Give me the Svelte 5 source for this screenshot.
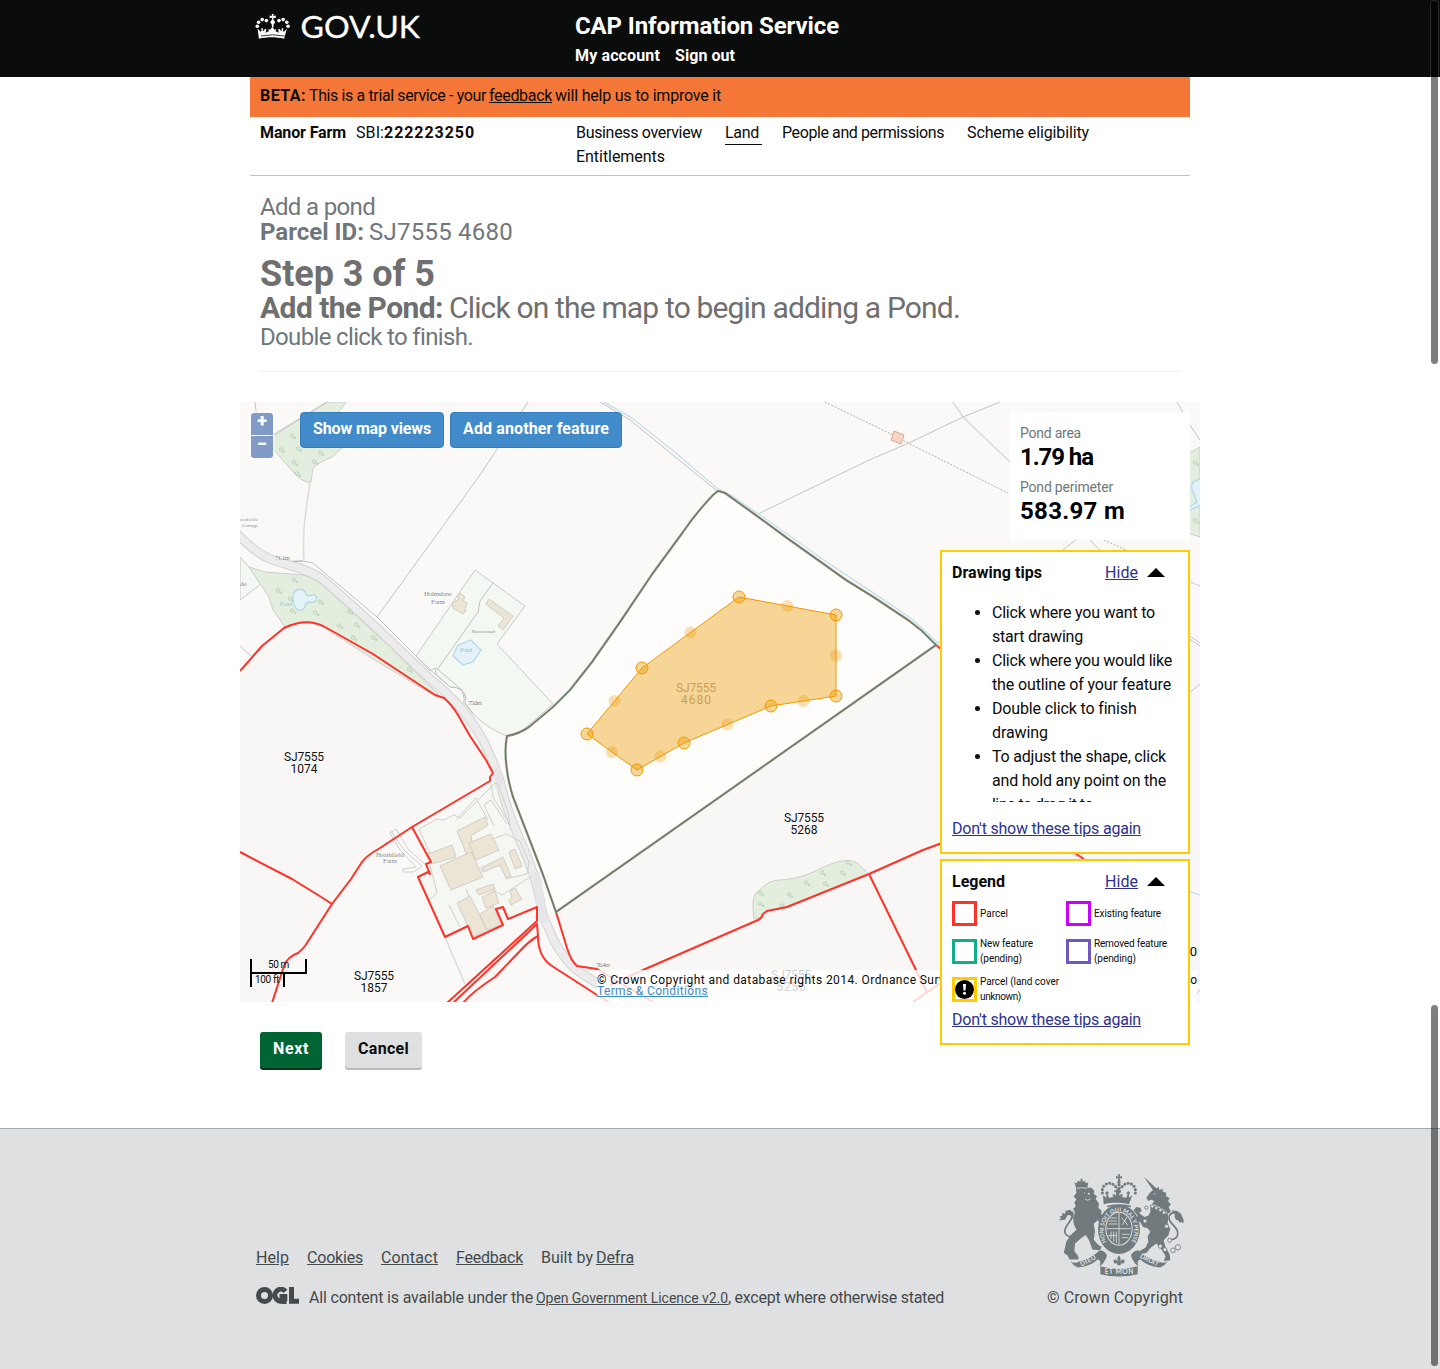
<script>
  // Spreads a run of text to a set measure by adjusting its letter-spacing.
  function fit(node, width) {
    const natural = node.getBoundingClientRect().width;
    node.style.letterSpacing = `${(width - natural) / node.textContent.length}px`;
  }

  const tips = [
    [['Click where you want to', 163], ['start drawing', 91]],
    [['Click where you would like', 180], ['the outline of your feature', 179]],
    [['Double click to finish', 144], ['drawing', 56]],
    [['To adjust the shape, click', 174], ['and hold any point on the', 174], ['line to drag it to', 101]]
  ];

  const legend = [
    { kind: 'parcel', lines: [['Parcel', 28]] },
    { kind: 'existing', lines: [['Existing feature', 67]] },
    { kind: 'added', lines: [['New feature', 53], ['(pending)', 42]] },
    { kind: 'removed', lines: [['Removed feature', 73], ['(pending)', 42]] },
    { kind: 'unknown', lines: [['Parcel (land cover', 79], ['unknown)', 41]] }
  ];

  const links = [['Help', 33], ['Cookies', 56], ['Contact', 57], ['Feedback', 67]];

  const pond = [[739, 597], [836, 615], [836, 696], [771, 706], [684, 743], [637, 770], [587, 734], [642, 668]];
  const mids = pond.map((p, i) => {
    const q = pond[(i + 1) % pond.length];
    return [(p[0] + q[0]) / 2, (p[1] + q[1]) / 2];
  });
  const pondPoints = pond.map((p) => p.join()).join(' ');

  const trees = [
    [293, 436], [282, 450], [299, 449], [321, 453], [295, 463], [315, 462], [298, 474],
    [295, 580], [279, 591], [291, 599], [321, 602], [293, 611], [316, 613], [340, 626], [357, 625], [354, 638], [374, 638], [410, 670],
    [761, 893], [761, 904], [790, 895], [807, 883], [823, 873], [826, 884], [843, 873], [783, 906], [849, 863],
    [1196, 463], [1196, 521], [350, 612]
  ];

  const parcels = [
    ['SJ7555', '1074', 304, 761], ['SJ7555', '5268', 804, 822], ['SJ7555', '1857', 374, 980]
  ];

  const parcelPath =
    'M718,491L725,493L757,516L787,538L825,565L846,580L875,598L908,620L922,631L936,645L556,912L542,872L527,833L513,797Q508,780 507,770Q504,750 507,736Q519,734 529,727L553,707L570,690L592,662L620,622L653,573L683,532Q695,514 713,495Z';
  const road =
    'M236,533Q256,553 268,558C286,566 305,567 322,579Q350,603 380,631L430,679Q465,706 485,744Q497,770 500,782Q506,808 520,840Q535,873 540,900Q541,914 549,929Q557,951 574,968Q596,985 640,1004';

  const crownBeads = [[2.3, 26.2], [3.6, 22.2], [7.2, 19.6], [11.4, 20.6], [24, 20.6], [28.2, 19.6], [31.8, 22.2], [33.1, 26.2]];
  const crestBeads = [[190, 98], [190, 88], [194, 78], [202, 71], [212, 69], [222, 72], [230, 79], [249, 79], [257, 72], [267, 69], [277, 71], [285, 78], [289, 88], [289, 98]];
</script>

{#snippet crown()}
  <g>
    {#each crownBeads as [x, y]}
      <circle cx={x} cy={y} r="1.8" />
    {/each}
    <path d="M16.700 14h2l-.4 2.100 2.500-.5v2.600l-2.500-.5.3 2.500a2 2 0 0 1 .1 3.800l-.3 3.400h-1.400l-.3-3.400a2 2 0 0 1 .1-3.800l.3-2.500-2.500.5v-2.600l2.500.5z" />
    <path d="M2.600 28.600l2.900 3.200 1-.9-.3-2.700h1.600l.1 3.200 2.400-2.700 1.100.8-.8 3.200 3.300-1.500-.6-2.300 1.900.9 1.500-2.300 1 0 .1 0 1.500 2.300 1.900-.9-.6 2.300 3.300 1.500-.8-3.200 1.100-.8 2.400 2.700.1-3.200h1.600l-.3 2.700 1 .9 2.900-3.200-2.800 10.100c-8-2-17.200-2-25.200 0z" />
  </g>
{/snippet}

<header class="masthead">
  <div class="wrap masthead-row">
    <div class="brand">
      <svg class="brand-mark" viewBox="0 0 200 48" role="img" aria-label="GOV.UK">
        {@render crown()}
        <path class="cut" d="M6 36Q17.700 33.600 29.400 36" />
        <text x="45.500" y="37.800" textLength="119.500" lengthAdjust="spacingAndGlyphs">GOV.UK</text>
      </svg>
    </div>
    <div class="service">
      <div class="service-name"><span use:fit={264}>CAP Information Service</span></div>
      <nav class="account"><a use:fit={85}>My account</a><a use:fit={60}>Sign out</a></nav>
    </div>
  </div>
</header>

<main class="wrap">
  <div class="beta">
    <b use:fit={46}>BETA:</b><span use:fit={177}>This is a trial service - your</span><span class="u" use:fit={63}>feedback</span><span use:fit={166}>will help us to improve it</span>
  </div>

  <div class="business">
    <div class="business-id">
      <b use:fit={86}>Manor Farm</b>
      <span class="sbi"><span use:fit={28}>SBI:</span><b use:fit={91}>222223250</b></span>
    </div>
    <nav class="tabs">
      <a use:fit={126}>Business overview</a>
      <a class="current"><span use:fit={34}>Land</span></a>
      <a use:fit={162}>People and permissions</a>
      <a use:fit={122}>Scheme eligibility</a>
      <a use:fit={89}>Entitlements</a>
    </nav>
  </div>

  <section class="intro">
    <p class="lead"><span use:fit={115}>Add a pond</span></p>
    <p class="lead"><b use:fit={104}>Parcel ID:</b><span use:fit={144}>SJ7555 4680</span></p>
    <h1><span use:fit={175}>Step 3 of 5</span></h1>
    <h2><b use:fit={183}>Add the Pond:</b><span use:fit={511}>Click on the map to begin adding a Pond.</span></h2>
    <p class="lead"><span use:fit={212}>Double click to finish.</span></p>
  </section>

  <section class="map">
    <svg class="canvas" viewBox="240 402 960 600" aria-label="Map">
      <rect class="ground" x="240" y="402" width="960" height="600" />
      <g class="fields">
        <path d="M240,671L262,646L284,627L307,622L373,658L435,695L455,712L493,772L490,781L412,827L363,860L332,904L272,1002H240Z" />
        <path d="M936,645L556,912L575,964L597,969L653,1002H1200V645Z" />
      </g>

      <g class="pale">
        <path d="M240,557L249,567L261,584L240,600Z" />
        <path d="M475,570L525,606L497,644L553,704L523,730Q515,736 507,736Q490,730 474,715L463,702L466,698Q464,687 450,687L435,674L416,656Z" />
        <path class="bare" d="M412,827L453,818L490,783L505,790L524,845L529,870L536,910L503,925L445,937L418,877L431,862Z" />
      </g>
      <g class="wood">
        <path d="M327,402H346L338,413L342,448L332,457Q319,462 313,468L311,482Q303,483 295,474L267,442L275,435Z" />
        <path d="M249,567L265,572L303,575Q313,577 320,583L350,610L390,647L438,694L433,695L373,659L323,627Q305,618 285,627L273,610L269,597Z" />
        <path d="M754,919Q750,893 760,890Q768,880 780,880Q795,880 813,872Q846,855 857,863L869,874L787,907L766,911L760,918Z" />
        <path d="M1188,454L1200,447V537L1188,533Z" />
      </g>

      <g class="line">
        <path d="M255,402L260,447" />
        <path d="M327,402L266,439L261,447L267,444" />
        <path class="soft" d="M310,482L307,503Q302,533 304,560" />
        <path class="dark" d="M240,533Q258,556 271,561Q290,562 303,561" />
        <path d="M303,561L313,563L377,617L416,656L430,671L435,668L436,674L450,687Q464,686 466,700" />
        <path d="M528,402L480,475L377,617" />
        <path d="M240,646L251,656" />
        <path d="M493,583L480,601L478,612L437,670" />
        <path class="soft" d="M445,937L465,984" />
        <path d="M600,402L630,420L673,455L717,491" />
        <path d="M758,514L867,461L909,443L963,417L1000,402" />
        <path class="soft" d="M953,402L963,417L1010,462" />
        <path class="dots" d="M825,402L893,435L908,443L1008,493" />
        <path class="dots" d="M1104,540L1128,551" />
        <path d="M1063,550L1078,538M1090,540L1100,550" />
        <path d="M1177,402L1190,425L1200,440" />
        <path class="dots" d="M1188,581L1200,586" />
        <path d="M1188,635L1200,643M1188,638L1200,646M1188,694L1200,684" />
        <path d="M1188,1003L1200,990" />
        <path d="M436,668L462,690Q464,700 466,704L474,715" />
      </g>
      <path class="road-edge" d={road} />
      <path class="road" d={road} />
      <path class="road-shade" d="M497,768L499,788M536,872L540,900L543,922" />

      <g class="tracks">
        <path d="M391,831L404,850L422,866L414,872L403,872L403,869L416,867L400,850L390,833L396,829L408,849L426,865" />
        <path d="M419,829L437,819L443,820L454,815L460,818L495,783L498,784L508,812L510,825L493,797L491,784M419,829L430,853M456,820L476,798L488,820M484,805L494,826M484,805L491,800L507,824M490,840L506,834L520,841L529,862L527,874L505,879M430,865L437,893L429,900M449,905L460,927M466,889L475,910M487,886L502,895L532,876" />
      </g>

      <g class="tan">
        <path d="M457,831L485,817L488,825L471,836L474,853L468,858Z" />
        <path d="M469,843L491,834L499,850L476,860Z" />
        <path d="M428,854L452,845L456,857L432,864Z" />
        <path d="M440,866L471,852L483,877L451,890Z" />
        <path d="M481,868L503,857L511,876L506,878L500,865L483,872Z" />
        <path d="M509,852L515,849L522,866L515,869Z" />
        <path d="M457,903L470,896L487,930L473,937Z" />
        <path d="M480,914L493,906L501,925L487,930Z" />
        <path d="M476,890L493,884L495,889L479,895Z" />
        <path d="M482,897L495,891L499,903L486,908Z" />
        <path d="M509,900L512,897L510,891L515,888L518,893L522,899L511,905Z" />
        <path d="M452,603L456,601L459,599L457,596L460,593L465,597L463,601L467,603L465,609L466,611L463,614L453,608Z" />
        <path d="M489,599L513,616L503,630L498,626L504,618L486,604Z" />
      </g>
      <path class="pink" d="M894,431L904,435L901,444L891,440Z" />

      <g class="water">
        <path d="M293,596C294,588 303,588 305,592C307,599 310,594 315,595C319,599 314,604 309,602C304,602 307,608 302,610C295,612 292,602 293,596Z" />
        <path d="M471,640L481,650L473,662L463,665L453,656L458,645Z" />
        <path d="M1201,479Q1190,481 1192,489L1197,502L1188,508L1188,511L1201,505Z" />
      </g>
      <g class="stream">
        <path d="M604,402L632,418L676,453L718,489L729,494L760,515L790,536L828,563L878,596L912,619L938,643L942,641" />
        <path d="M1068,852L1084,860M1188,891L1200,895" />
      </g>

      <g class="trees">
        {#each trees as [x, y]}
          <circle cx={x - 1} cy={y - 0.5} r="1.7" />
          <circle cx={x + 2} cy={y + 1.8} r="0.9" />
        {/each}
      </g>

      <g class="names">
        <text x="240" y="521" textLength="18">oodside</text>
        <text x="242" y="527" textLength="16">Cottage</text>
        <text class="n7" x="275" y="560" textLength="15">71.1m</text>
        <text class="n7" x="240" y="586">de</text>
        <text class="n7" x="424" y="596" textLength="28">Holmshaw</text>
        <text class="n7" x="431" y="604" textLength="14">Farm</text>
        <text x="472" y="633" textLength="23">Ravenwood</text>
        <text class="n7" x="468" y="705" textLength="14">75.0m</text>
        <text class="n7" x="376" y="857" textLength="28">Heathfield</text>
        <text class="n7" x="383" y="863" textLength="14">Farm</text>
        <text class="n7 faint" x="546" y="871" textLength="15">75.3m</text>
        <text class="n7" x="596" y="967" textLength="14">76.4m</text>
        <text class="blue" x="280" y="606" textLength="12">Pond</text>
        <text class="blue" x="460" y="652" textLength="12">Pond</text>
      </g>

      <g class="red">
        <path d="M240,671L262,646L284,628Q307,617 325,627L373,654L435,695L444,698Q452,705 458,715L470,736L486,760L493,773L490,777L490,781L412,827L380,848Q366,856 362,862L351,879L332,904L305,946Q302,950 298,953Q287,957 284,966L272,1003" />
        <path d="M240,852L292,879L318,895L332,904" />
        <path d="M412,827L431,862L426,864L430,874L428,872L418,877L445,937L468,926L473,939L503,925L496,909L503,907L508,919L537,907V921L447,1003" />
        <path d="M453,1003L537,924L538,936Q538,957 552,966L597,995L610,1003" />
        <path d="M463,1003Q472,992 495,977L519,952Q530,940 538,936" />
        <path d="M556,912L567,948Q571,961 577,966L597,969L653,1002" />
        <path d="M610,985L643,970L758,920Q762,918 763,914L767,911L787,907L869,874L923,850L942,843" />
        <path d="M869,874L916,970L927,993M913,1002L942,982" />
        <path d="M934,643L944,652M1070,850L1084,859" />
      </g>

      <path class="chosen" d={parcelPath} />
      <path class="chosen-rim" d={parcelPath} />

      <g class="labels">
        {#each parcels as [a, b, x, y]}
          <text {x} {y} textLength="40">{a}</text>
          <text {x} y={y + 12} textLength="27">{b}</text>
        {/each}
        <text class="dim" x="696" y="692" textLength="40">SJ7555</text>
        <text class="dim" x="696" y="704" textLength="30">4680</text>
        <text x="791" y="979" textLength="40">SJ7555</text>
        <text x="791" y="991" textLength="29">5256</text>
      </g>

      <polygon class="pond" points={pondPoints} />
      {#each pond as [x, y]}
        <circle class="vertex" cx={x} cy={y} r="6" />
      {/each}
      {#each mids as [x, y]}
        <circle class="mid" cx={x} cy={y} r="6" />
      {/each}
    </svg>

    <div class="zoom"><button aria-label="Zoom in">+</button><button aria-label="Zoom out">−</button></div>

    <div class="tools">
      <button class="blue-btn"><span use:fit={118}>Show map views</span></button>
      <button class="blue-btn"><span use:fit={146}>Add another feature</span></button>
    </div>

    <div class="scale">
      <div class="metric"><span use:fit={21}>50 m</span></div>
      <div class="imperial"><span use:fit={24}>100 ft</span></div>
    </div>

    <span class="grid-ref">0</span>
    <div class="credit">
      <div class="credit-row"><span use:fit={361}>© Crown Copyright and database rights 2014. Ordnance Survey</span><span>o</span></div>
      <a use:fit={111}>Terms &amp; Conditions</a>
    </div>

    <div class="measure">
      <div class="m-label"><span use:fit={61}>Pond area</span></div>
      <div class="m-value"><span use:fit={73}>1.79 ha</span></div>
      <div class="m-label"><span use:fit={93}>Pond perimeter</span></div>
      <div class="m-value"><span use:fit={105}>583.97 m</span></div>
    </div>

    <div class="panels">
      <section class="panel tips">
        <div class="panel-head"><b use:fit={90}>Drawing tips</b><span class="hide"><a use:fit={33}>Hide</a><i class="tri"></i></span></div>
        <ul>
          {#each tips as lines}
            <li>{#each lines as [text, w]}<div><span use:fit={w}>{text}</span></div>{/each}</li>
          {/each}
        </ul>
        <a class="dismiss"><span use:fit={189}>Don't show these tips again</span></a>
      </section>

      <section class="panel key">
        <div class="panel-head"><b use:fit={53}>Legend</b><span class="hide"><a use:fit={33}>Hide</a><i class="tri"></i></span></div>
        <div class="key-grid">
          {#each legend as item}
            <div class="key-item">
              <span class="swatch {item.kind}">
                {#if item.kind === 'unknown'}
                  <svg viewBox="0 0 19 19"><circle cx="9.500" cy="9.500" r="9.500" /><path d="M8 4h3l-.5 6.500h-2z" /><circle class="dot" cx="9.500" cy="13.300" r="1.500" /></svg>
                {/if}
              </span>
              <div class="key-text">{#each item.lines as [text, w]}<div><span use:fit={w}>{text}</span></div>{/each}</div>
            </div>
          {/each}
        </div>
        <a class="dismiss"><span use:fit={189}>Don't show these tips again</span></a>
      </section>
    </div>
  </section>

  <div class="actions">
    <button class="next"><span use:fit={36}>Next</span></button>
    <button class="cancel"><span use:fit={51}>Cancel</span></button>
  </div>
</main>

<footer class="footer">
  <div class="footer-row">
    <div class="footer-main">
      <nav class="footer-links">
        {#each links as [text, w]}<a use:fit={w}>{text}</a>{/each}
        <span class="built"><span use:fit={52}>Built by</span><a use:fit={38}>Defra</a></span>
      </nav>
      <div class="licence">
        <svg class="ogl" viewBox="0 0 43 17" aria-label="OGL">
          <circle cx="8.500" cy="8.500" r="6" />
          <path d="M29.500 4.300A6 6 0 1 0 28.800 12.800V9.600H23.500M28 8v9" />
          <path d="M35.500 0V14.300H43" />
        </svg>
        <span use:fit={224}>All content is available under the</span><a class="small" use:fit={192}>Open Government Licence v2.0</a><span class="tail" use:fit={216}>, except where otherwise stated</span>
      </div>
    </div>
    <div class="copyright">
      <svg class="crest" viewBox="54 38 381 314" aria-label="Royal coat of arms">
        <g class="ink">
          <path d="M236 42h8l-2 7 7-2v8l-7-2 2 9h-8l2-9-7 2v-8l7 2z" />
          {#each crestBeads as [x, y]}<circle cx={x} cy={y} r="4.600" />{/each}
          <circle cx="240" cy="84" r="5" /><circle cx="240" cy="73" r="4.500" /><circle cx="240" cy="66" r="5" /><circle cx="240" cy="94" r="5" />
          <path d="M192 104l10 8 0-10-4-4 6-6 6 6-4 4 4 10 14-2-4-6 5-4 5 6 2-10h-6v-6h6v-5h8v5h6v6h-6l2 10 5-6 5 4-4 6 14 2 4-10-4-4 6-6 6 6-4 4 0 10 10-8-10 28c-26-6-50-6-76 0z" />
          <path d="M204 136q36-8 72 0v5q-36-8-72 0z" />
          <!-- lion -->
          <path d="M111 82L106 66L113 69L117 61L124 64L125 55H130L131 64L138 61L141 69L148 66L145 82L158 82L166 92L164 100L174 108L170 116L180 130L178 142L188 152L186 160L196 170L206 196L198 222L184 212L188 196L176 180L164 190L168 214L164 238L176 252L188 260L182 270L160 268L150 240L140 224L126 234L108 250L106 272L118 288L118 298L92 298L84 284L74 278L78 262L82 244L94 226L112 208L104 190L102 172L108 156L102 146L110 138L106 126L112 118L104 108L112 98Z" />
          <path class="tail-line" d="M102 228c-18 4-30-8-22-26c8-16 28-32 20-48" />
          <path d="M58 180l8-6-4-6 8-2-1-8 9 2 2-9 14-3 9 12-3 14-6-9-8-1-8 14-9 1z" />
          <!-- unicorn -->
          <path d="M315 49L352 84L360 80L360 88L372 86L371 94L382 97L381 107L392 114L387 122L396 132L389 141L396 154L386 160L388 172L386 190L394 206L388 226L374 240L380 262L392 282L394 300L374 302L380 288L364 262L352 250L336 262L322 278L298 282L302 272L320 262L328 244L326 228L334 214L326 204L312 200L304 186L290 178L296 166L284 150L292 140L304 142L308 152L300 158L316 170L328 166L334 154L334 138L346 122L336 118L328 122L322 112L334 96L342 90Z" />
          <path class="tail-line" d="M388 236c16 5 30-3 28-20c-1-16-24-26-26-42c-1-12 8-17 18-16" />
          <path d="M400 150l14 2 12 8 8 18-1 12-6-6-4 4-6-8-6-2-4-8 1-12-8-4z" />
          <!-- shield and garter -->
          <ellipse cx="240" cy="207" rx="63" ry="74" />
          <!-- scrolls -->
          <path d="M94 302q12 10 26 2 36-8 62-34 18 2 22 16-2 10-12 24l-10 8q6-18-6-20-24 22-60 24-14-6-22-20z" />
          <path d="M386 302q-12 10-26 2-36-8-62-34-18 2-22 16 2 10 12 24l10 8q-6-18 6-20 24 22 60 24 14-6 22-20z" />
          <path d="M184 318q56 16 112 0v24q-56 14-112 0z" />
        </g>
        <g class="cutout">
          <ellipse cx="240" cy="205" rx="41" ry="51" />
          <path class="plain" d="M228 286h24l-2 28h-20z" />
          <circle cx="149" cy="100" r="3" /><circle cx="136" cy="98" r="1.500" /><circle cx="347" cy="100" r="2" />
          <path class="thin" d="M138 116l8 4 8-4M114 84q14-4 30 0" />
          <path d="M336 132Q360 138 384 158" />
        </g>
        <g class="ink">
          <path d="M240 286q8 8 3 18l8-7 6 4-2 8-10 1v5h-10v-5l-10-1-2-8 6-4 8 7q-5-10 3-18z" />
          <ellipse cx="240" cy="205" rx="38" ry="48" />
        </g>
        <g class="cutout">
          <path class="thin" d="M240 158V252M203 205H277" />
          <path class="thin" d="M209 182h24M209 191h26M213 173h20M216 214v22M224 214v30M232 214v34M208 226h26M248 222h24M248 232h20M248 172l18 22M264 170l-14 24" />
        </g>
        <g class="chain">
          <circle cx="340" cy="138" r="5" /><circle cx="352" cy="143" r="5" /><circle cx="364" cy="149" r="5" /><circle cx="375" cy="157" r="5" /><circle cx="322" cy="142" r="5" /><circle cx="318" cy="182" r="6" />
          <circle cx="364" cy="258" r="6" /><circle cx="378" cy="268" r="6" /><circle cx="392" cy="240" r="6" /><circle cx="402" cy="270" r="7" /><circle cx="417" cy="261" r="8" /><circle cx="383" cy="198" r="6" />
        </g>
        <g class="motto">
          <text x="240" y="342" textLength="86">ET MON</text>
          <text transform="translate(150 307) rotate(-27)" textLength="50">DIEU</text>
          <text transform="translate(328 305) rotate(27)" textLength="60">DROIT</text>
          <path id="garter" d="M202 243A46 57 0 1 1 278 243" fill="none" />
          <text class="ring"><textPath href="#garter" startOffset="50%">HONI SOIT QUI MAL Y PENSE</textPath></text>
        </g>
      </svg>
      <span use:fit={136}>© Crown Copyright</span>
    </div>
  </div>
</footer>

<i class="thumb upper"></i>
<i class="thumb lower"></i>

<style>
  :global(body) {
    margin: 0;
    background: #fff;
    color: #0b0c0c;
    font: 16px/24px Roboto, 'Liberation Sans', sans-serif;
  }
  p, h1, h2, ul { margin: 0; padding: 0; font-weight: 400; }
  b { font-weight: 700; }
  span, a, b { white-space: nowrap; }
  button { font: inherit; margin: 0; padding: 0; border: 0; }
  .wrap { width: 960px; margin: 0 auto; }

  .masthead { height: 77px; background: #0b0c0c; color: #fff; font-weight: 700; }
  .masthead-row { display: flex; }
  .brand { width: 335px; padding-left: 15px; box-sizing: border-box; }
  .brand-mark { display: block; width: 200px; height: 48px; fill: #fff; }
  .brand-mark text { font: 400 31px Lato, sans-serif; stroke: #fff; stroke-width: 0.300px; }
  .cut { fill: none; stroke: #0b0c0c; stroke-width: 0.800; }
  .service { padding-top: 11px; }
  .service-name { font-size: 24px; line-height: 30px; margin-bottom: 3px; }
  .account { display: flex; gap: 15px; }

  .beta { display: flex; height: 33px; margin: 0 10px; padding: 7px 10px 0; background: #f47738; }
  .beta b, .beta span { margin-right: 3px; }
  .u { text-decoration: underline; }
  .business { display: flex; height: 54px; margin: 0 10px; padding: 4px 10px 0; border-bottom: 1px solid #bfc1c3; }
  .business-id { display: flex; gap: 10px; width: 316px; }
  .sbi { display: flex; }
  .tabs { display: flex; flex-wrap: wrap; width: 560px; column-gap: 23px; align-content: flex-start; }
  .tabs a { display: block; height: 24px; }
  .tabs .current { box-sizing: border-box; width: 37px; margin-right: -3px; border-bottom: 1px solid #0b0c0c; }

  .intro { margin: 0 20px; padding: 19px 0 21px; color: #6f777b; border-bottom: 1px solid #eee; }
  .lead { display: flex; gap: 5px; font-size: 24px; line-height: 25px; }
  h1 { margin-top: 11px; font-size: 36px; line-height: 36px; font-weight: 700; color: #6f6f6f; }
  h2 { display: flex; gap: 6px; font-size: 30px; line-height: 32px; padding-bottom: 1px; color: #6f6f6f; }

  .map { position: relative; height: 600px; margin-top: 30px; font-size: 16px; }
  .canvas { display: block; width: 960px; height: 600px; }
  .canvas path { fill: none; }
  .ground { fill: #faf9f8; }
  .canvas .fields path { fill: #f8f7f6; }
  .canvas .pale path { fill: #f3f8f3; stroke: #c8cac8; }
  .canvas .pale .bare { fill: #f5f7f3; stroke: none; }
  .canvas .wood path { fill: #e4eedf; stroke: #cdcdcb; }
  .line path { stroke: #c4c3c2; }
  .line .soft { stroke: #dbdad9; stroke-width: 1.500; }
  .line .dark { stroke: #9c9c9c; }
  .line .dots { stroke: #b0afae; stroke-dasharray: 2 1.500; }
  .road-edge { stroke: #d2d2d2; stroke-width: 9.500; }
  .road { stroke: #ececec; stroke-width: 7.500; }
  .road-shade { stroke: #e6e6e8; stroke-width: 8; }
  .tracks path { stroke: #cfcfcc; }
  .canvas .tan path { fill: #ece4d5; stroke: #d3cec5; }
  .canvas .pink { fill: #fad3c3; stroke: #d8a794; }
  .canvas .water path { fill: #e4f1f8; stroke: #b0daeb; stroke-width: 1.300; }
  .stream path { stroke: #c8e2ee; stroke-width: 1.500; }
  .trees circle { fill: none; stroke: #b0ceb0; stroke-width: 0.900; }
  .names { font: 5px 'Liberation Serif', serif; fill: #8f8f8f; }
  .names .n7 { font-size: 7px; }
  .names .faint { fill: #d5d5d5; }
  .names .blue { font-size: 6px; fill: #8cc6de; }
  .red path { stroke: #ff3228; stroke-width: 2; stroke-linejoin: round; }
  .canvas .chosen { fill: #fefdfc; stroke: #7d9483; stroke-width: 2.200; }
  .chosen-rim { stroke: #87614f; stroke-width: 0.800; }
  .labels { font: 12px Roboto, sans-serif; fill: #111; text-anchor: middle; }
  .labels .dim { fill: #b0a392; }
  .pond { fill: #ee9900; fill-opacity: 0.400; stroke: #ee9900; stroke-width: 1; }
  .vertex { fill: #ee9900; fill-opacity: 0.400; stroke: #ee9900; stroke-width: 1; }
  .mid { fill: #ee9900; fill-opacity: 0.300; }

  .zoom { position: absolute; left: 9px; top: 9px; display: grid; gap: 1px; padding: 2px; border-radius: 4px; background: rgba(255, 255, 255, 0.400); }
  .zoom button { display: block; width: 22px; height: 22px; background: #809cc6; color: #fff; font-weight: 900; font-size: 18px; line-height: 14px; padding-bottom: 7px; border-radius: 3px 3px 0 0; }
  .zoom button + button { border-radius: 0 0 3px 3px; }
  .tools { position: absolute; left: 60px; top: 10px; display: flex; gap: 6px; }
  .blue-btn { height: 36px; padding: 0 12px 3px; border: 1px solid #357ebd; border-radius: 4px; background: #428bca; color: #fff; font-weight: 700; }
  .scale { position: absolute; left: 10px; top: 557px; font-size: 10px; line-height: 12px; }
  .metric { box-sizing: border-box; width: 57px; height: 15px; border: solid #000; border-width: 0 2px 2px; text-align: center; }
  .imperial { box-sizing: border-box; width: 35px; height: 13px; border: solid #000; border-width: 0 2px; padding-left: 3px; }
  .grid-ref { position: absolute; right: 3px; top: 542px; font-size: 13px; line-height: 16px; }
  .credit { position: absolute; left: 357px; right: 3px; top: 568px; height: 32px; background: rgba(255, 255, 255, 0.800); font-size: 12px; line-height: 11px; padding-top: 5px; box-sizing: border-box; }
  .credit-row { display: flex; justify-content: space-between; }
  .credit a { display: inline-block; color: #428bca; text-decoration: underline; }

  .measure { position: absolute; right: 10px; top: 10px; width: 160px; height: 118px; padding: 10px 10px 0; background: #fff; }
  .m-label { font-size: 14px; line-height: 22px; color: #6f777b; }
  .m-value { font-size: 24px; line-height: 26px; padding-bottom: 6px; font-weight: 700; color: #000; }

  .panels { position: absolute; left: 700px; top: 148px; display: grid; grid-template-columns: 250px; gap: 5px; }
  .panel { box-sizing: border-box; padding: 9px 10px 0; border: 2px solid #fc0; background: #fff; }
  .tips { height: 304px; }
  .key { height: 186px; }
  .panel-head { display: flex; justify-content: space-between; padding-right: 13px; }
  .hide { display: flex; align-items: center; gap: 9px; }
  .hide a, .dismiss { color: #2e3191; text-decoration: underline; }
  .tri { width: 0; height: 0; border: solid transparent; border-width: 0 9.500px 9px; border-bottom-color: #000; margin-top: -2px; }
  .tips ul { height: 201px; margin-top: 16px; padding-left: 40px; overflow: hidden; }
  .dismiss { display: block; margin-top: 15px; }
  .key-grid { display: grid; grid-template-columns: 114px 112px; grid-auto-rows: 38px; margin-top: 7px; }
  .key-item { display: flex; gap: 3px; }
  .swatch { box-sizing: border-box; width: 25px; height: 25px; border: 3px solid; }
  .swatch svg { display: block; width: 19px; height: 19px; }
  .swatch path, .swatch .dot { fill: #fff; }
  .parcel { border-color: #ff3228; }
  .existing { border-color: #cc00ff; }
  .added { border-color: #11ad8c; }
  .removed { border-color: #6f58c2; }
  .unknown { border-color: #fc0; }
  .key-text { height: 24px; display: flex; flex-direction: column; justify-content: center; font-size: 10px; line-height: 15px; }
  .key .dismiss { margin-top: -7px; }

  .actions { display: flex; gap: 23px; padding: 30px 20px 58px; }
  .actions button { height: 36px; padding: 0 13px 3px; border-radius: 3px; font-weight: 700; margin-bottom: 2px; }
  .next { background: #006435; color: #fff; box-shadow: 0 2px 0 #003618; }
  .cancel { background: #dee0e2; color: #0b0c0c; box-shadow: 0 2px 0 #b9bbbd; }

  .footer { height: 240px; border-top: 1px solid #a1acb2; background: #dee0e2; color: #454a4c; }
  .footer a { color: #454a4c; text-decoration: underline; }
  .footer-row { display: flex; justify-content: space-between; width: 928px; margin: 0 auto; padding-top: 45px; }
  .footer-main { padding-top: 72px; }
  .footer-links { display: flex; gap: 18px; margin-bottom: 16px; }
  .built { display: flex; gap: 3px; }
  .licence { display: flex; }
  .ogl { width: 43px; height: 17px; margin: 1px 10px 0 0; fill: none; stroke: #454a4c; stroke-width: 5; }
  .small { font-size: 14px; margin-left: 3px; }
  .copyright { width: 137px; display: flex; flex-direction: column; align-items: flex-end; }
  .copyright span { align-self: flex-start; margin-top: 8px; }
  .crest { width: 127px; height: 104.600px; margin-top: -1px; }
  .ink { fill: #717b7e; }
  .tail-line { fill: none; stroke: #717b7e; stroke-width: 5; }
  .cutout { fill: #dee0e2; }
  .cutout path { fill: none; stroke: #dee0e2; stroke-width: 4; }
  .cutout .thin { stroke-width: 2.500; }
  .cutout .plain { fill: #dee0e2; stroke: none; }
  .chain { fill: #dee0e2; stroke: #717b7e; stroke-width: 2.500; }
  .motto { font: 700 20px Lato, sans-serif; fill: #dee0e2; text-anchor: middle; }
  .motto .ring { font-size: 17px; }

  .thumb { position: fixed; left: 1431px; width: 7px; border-radius: 4px; background: rgba(0, 0, 0, 0.500); }
  .upper { top: 1px; height: 363px; box-shadow: 0 0 0 1px rgba(255, 255, 255, 0.120); }
  .lower { top: 1005px; height: 361px; }
</style>
